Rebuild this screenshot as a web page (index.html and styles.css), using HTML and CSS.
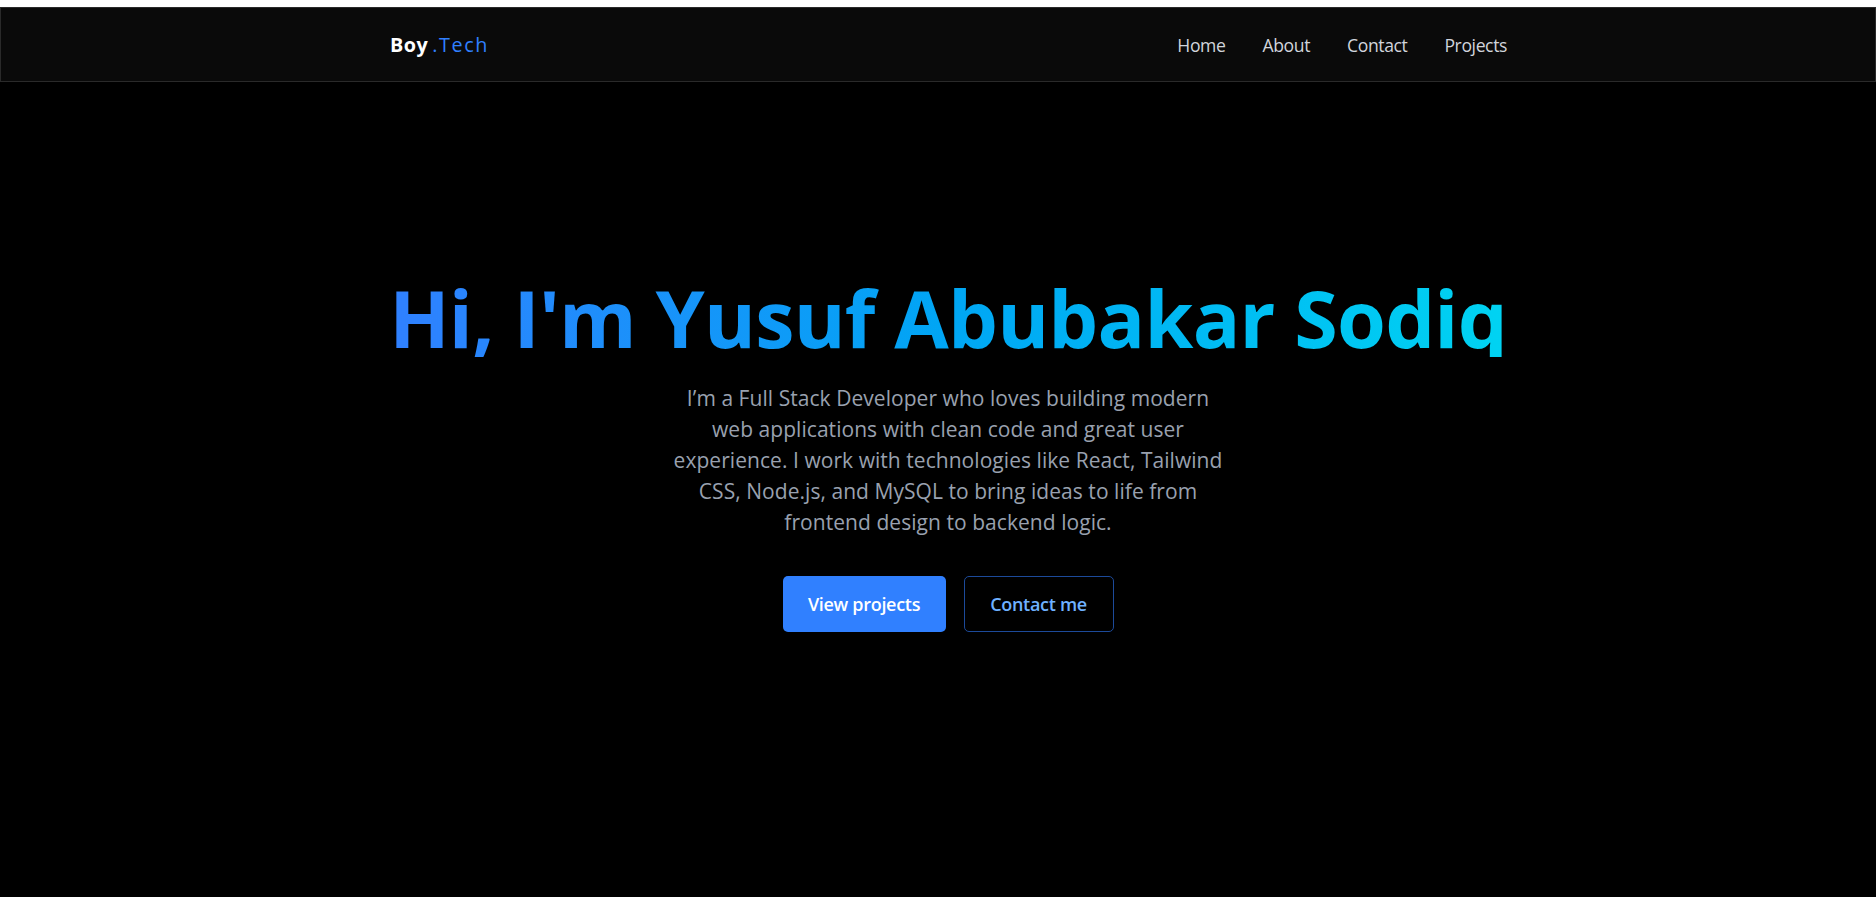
FILE: index.html
```html
<!DOCTYPE html>
<html lang="en">
<head>
<meta charset="utf-8">
<title>Boy.Tech</title>
<link rel="stylesheet" href="styles.css">
</head>
<body>
<div class="topstrip"></div>
<header class="site-header">
  <div class="container header-inner">
    <a class="logo" href="#">Boy<span class="logo-accent">.Tech</span></a>
    <nav class="nav">
      <a href="#">Home</a>
      <a href="#">About</a>
      <a href="#">Contact</a>
      <a href="#">Projects</a>
    </nav>
  </div>
</header>
<main class="hero">
  <h1 class="hero-title">Hi, I'm Yusuf Abubakar Sodiq</h1>
  <p class="hero-text">I’m a Full Stack Developer who loves building modern<br>web applications with clean code and great user<br>experience. I work with technologies like React, Tailwind<br>CSS, Node.js, and MySQL to bring ideas to life from<br>frontend design to backend logic.</p>
  <div class="hero-actions">
    <a class="btn btn-primary" href="#">View projects</a>
    <a class="btn btn-outline" href="#">Contact me</a>
  </div>
</main>
</body>
</html>
```

FILE: styles.css
```css
* { box-sizing: border-box; }
html, body { margin: 0; padding: 0; }
body {
  background: #000;
  min-height: 897px;
  font-family: "Open Sans", "Noto Sans", sans-serif;
  color: #fff;
}
a { text-decoration: none; color: inherit; }

.topstrip {
  height: 7px;
  background: #fff;
}

.site-header {
  background: #0a0a0a;
  border: 1px solid #2a2a2a;
}
.header-inner {
  height: 73px;
  display: flex;
  align-items: center;
  justify-content: space-between;
}
.container {
  width: 1116px;
  margin-left: calc(50% - 548px);
}

.logo {
  font-size: 19.8px;
  font-weight: 700;
  color: #fff;
  letter-spacing: 0.5px;
}
.logo-accent {
  margin-left: 4px;
  color: #3080ff;
  font-weight: 500;
  letter-spacing: 1.6px;
}

.nav {
  display: flex;
  gap: 37px;
  margin-right: -1px;
}
.nav a {
  font-size: 17.6px;
  color: #d1d5dc;
  letter-spacing: -0.4px;
}

.hero {
  display: flex;
  flex-direction: column;
  align-items: center;
  padding-top: 196px;
  padding-left: 20px;
  text-align: center;
}
.hero-title {
  margin: 0;
  font-size: 79px;
  line-height: 79px;
  font-weight: 700;
  letter-spacing: -0.8px;
  background: linear-gradient(to right, #3080ff, #00a6f4 50%, #00d3f2);
  -webkit-background-clip: text;
  background-clip: text;
  color: transparent;
}
.hero-text {
  margin: 26px 0 0;
  font-size: 21px;
  line-height: 31px;
  color: #99a1af;
  letter-spacing: 0.05px;
}
.hero-actions {
  margin-top: 38px;
  display: flex;
  gap: 18px;
}
.btn {
  height: 56px;
  display: inline-flex;
  align-items: center;
  justify-content: center;
  border-radius: 5px;
  font-size: 18px;
  font-weight: 600;
  letter-spacing: -0.3px;
}
.btn-primary {
  width: 163px;
  background: #3080ff;
  color: #fff;
}
.btn-outline {
  width: 150px;
  border: 1px solid #1c4a9a;
  color: #6fb1ff;
}
```
